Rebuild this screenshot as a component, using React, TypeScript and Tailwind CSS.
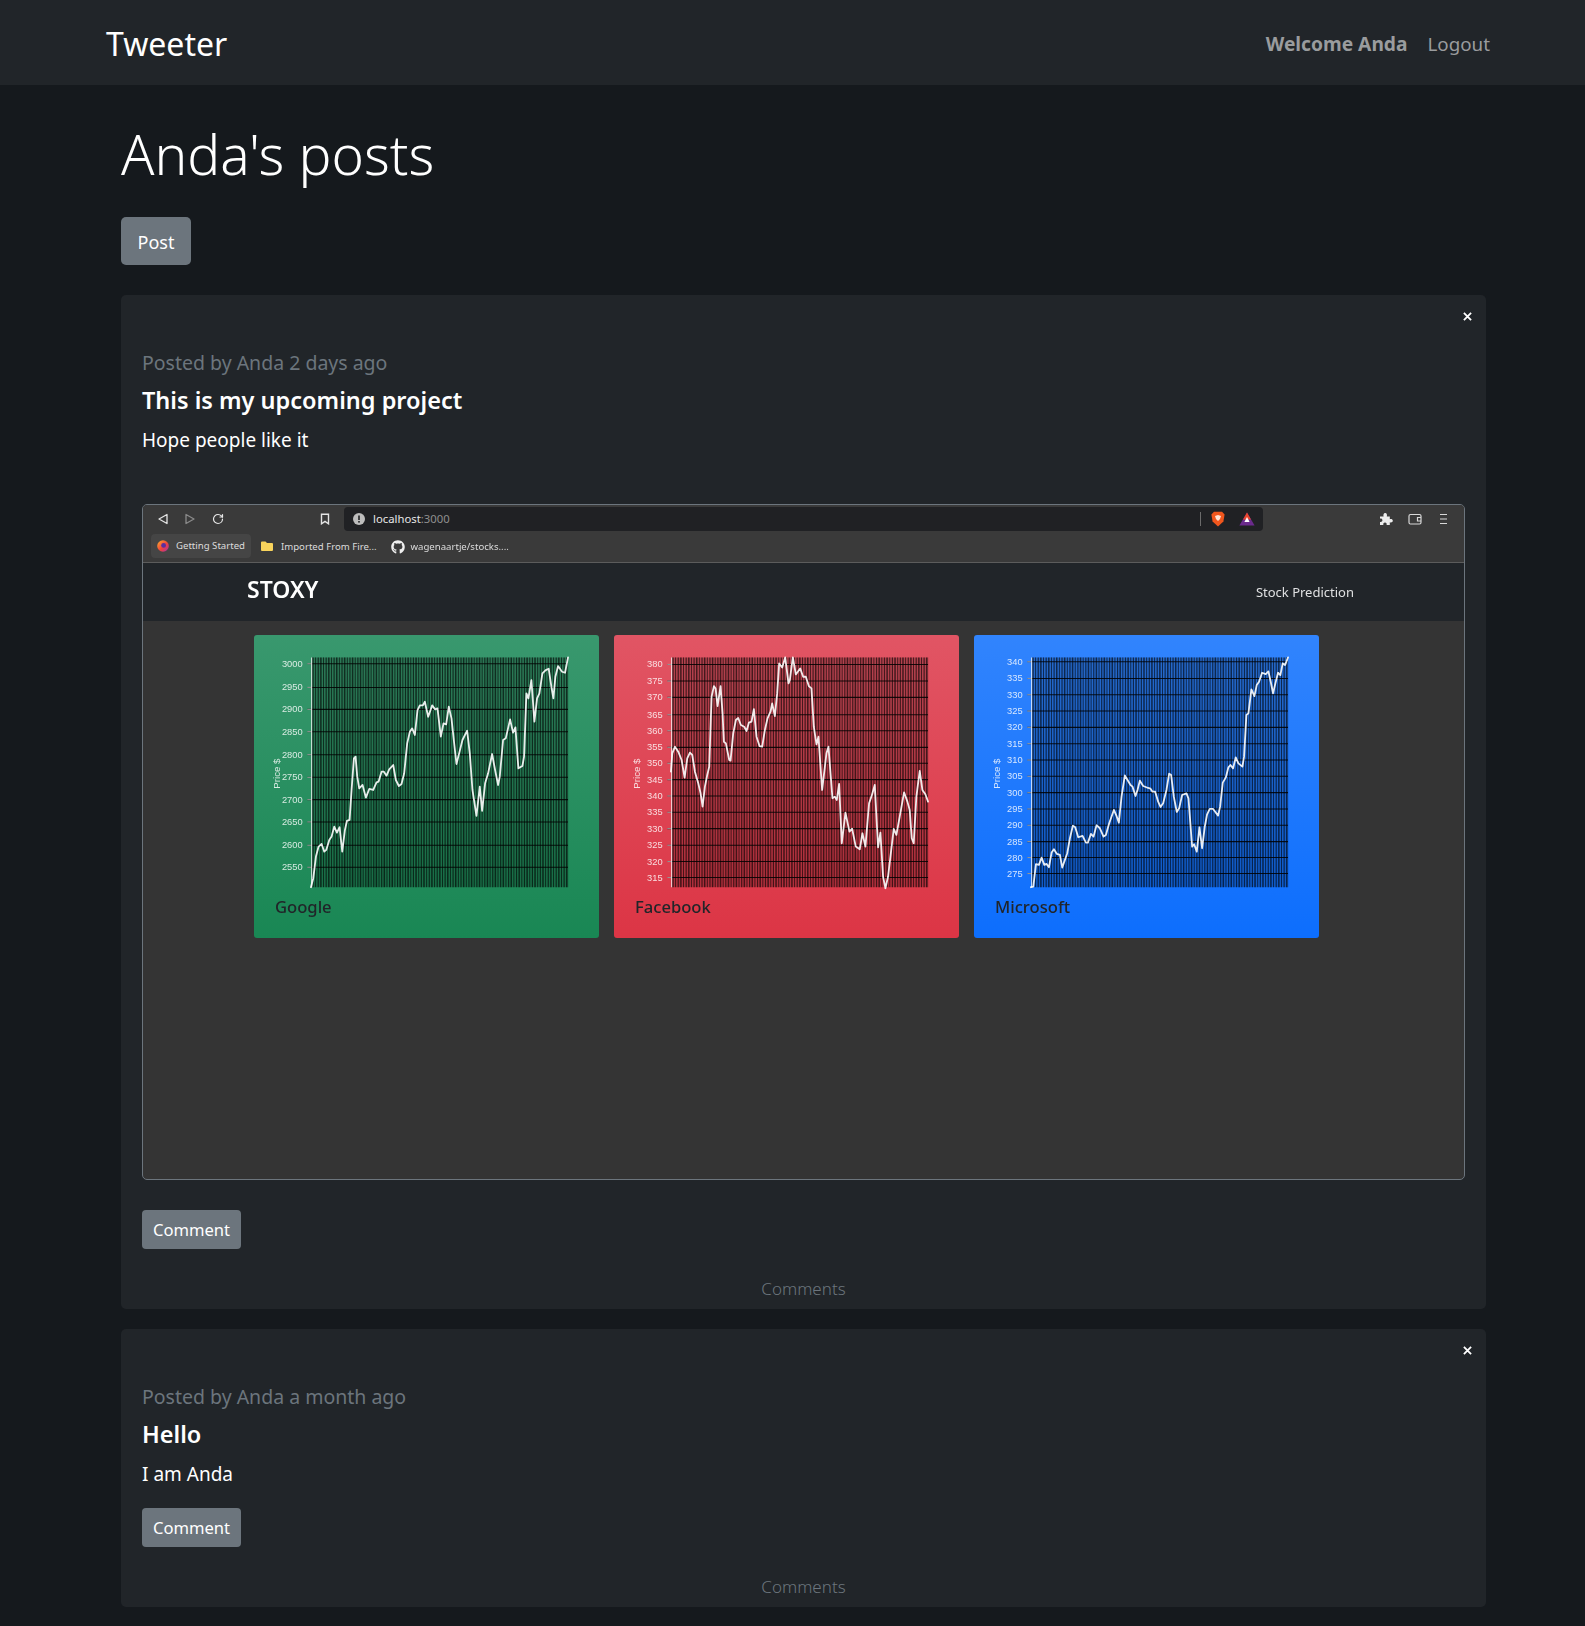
import { FaGithub } from "react-icons/fa";
import { RotateCw } from "lucide-react";

const F = "font-['Noto_Sans','Open_Sans',sans-serif]";

type Chart = {
  name: string;
  card: string;
  ticks: [string, number][];
  line: string;
};

const google: Chart = {
  name: "Google",
  card: "bg-[linear-gradient(180deg,#39986e,#198754)]",
  ticks: [["3000",101],["2950",172],["2900",238],["2850",305],["2800",374],["2750",442],["2700",509],["2650",576],["2600",646],["2550",712]],
  line: "183,772 190,745 198,680 206,650 215,642 223,665 229,660 238,630 245,620 253,590 261,608 269,592 277,665 285,600 291,573 299,570 305,480 312,385 317,380 322,440 328,475 338,465 348,503 358,477 370,480 380,457 386,455 395,425 402,425 410,437 418,418 430,405 438,450 447,468 455,462 463,430 472,340 480,305 487,295 495,315 503,240 510,226 519,226 525,215 535,260 547,226 556,238 563,235 573,320 581,280 589,283 597,230 605,265 612,330 620,402 628,370 638,330 652,302 660,370 668,480 680,558 690,470 697,543 706,460 715,430 727,372 736,420 745,465 750,440 760,330 768,325 781,268 790,308 797,292 806,415 818,408 823,380 830,190 836,205 845,150 854,275 862,205 869,190 878,130 888,120 897,116 905,170 911,205 917,140 925,108 937,125 946,128 955,82",
};
const facebook: Chart = {
  name: "Facebook",
  card: "bg-[linear-gradient(180deg,#e15564,#dc3545)]",
  ticks: [["380",103],["375",153],["370",202],["365",254],["360",302],["355",352],["350",400],["345",449],["340",498],["335",547],["330",596],["325",646],["320",695],["315",743]],
  line: "183,425 187,370 195,350 205,365 215,390 224,443 232,385 240,368 247,375 255,425 265,460 272,490 278,530 285,470 292,435 298,410 305,200 312,168 317,175 323,228 332,168 338,250 342,335 348,340 358,390 362,392 370,310 378,270 385,264 393,285 403,290 410,303 417,278 425,275 432,237 440,320 449,348 457,350 465,300 473,265 482,245 487,220 495,258 502,190 508,100 517,112 526,82 536,160 540,150 549,82 558,133 571,115 580,140 588,140 597,168 605,175 612,290 620,343 626,320 637,480 650,370 656,350 668,505 675,500 681,510 688,462 696,640 707,548 719,605 727,596 738,650 750,658 758,610 767,650 778,520 785,500 795,465 805,652 812,608 820,740 827,775 835,740 852,597 860,615 870,560 883,487 893,515 900,540 906,625 912,640 920,500 930,423 938,480 947,493 955,515",
};
const microsoft: Chart = {
  name: "Microsoft",
  card: "bg-[linear-gradient(180deg,#3184fd,#0d6efd)]",
  ticks: [["340",95],["335",145],["330",194],["325",243],["320",292],["315",341],["310",390],["305",439],["300",488],["295",537],["290",586],["285",635],["280",683],["275",731]],
  line: "183,772 190,770 198,703 207,705 215,683 223,705 230,702 237,712 245,668 252,658 261,672 270,675 277,713 285,690 292,670 300,625 309,587 316,592 325,622 338,618 348,638 354,638 363,612 371,620 380,586 390,595 401,620 408,615 418,580 432,540 440,558 447,578 455,500 465,436 473,450 482,465 488,470 497,498 503,480 510,452 520,468 535,474 542,476 548,485 556,485 565,515 572,531 580,520 590,480 598,431 604,435 612,500 621,546 628,535 637,495 650,490 656,505 667,650 673,643 681,665 689,592 697,655 705,590 712,553 720,537 730,537 745,557 751,530 759,458 768,443 776,412 782,405 790,415 798,382 806,400 818,410 823,380 830,255 836,250 845,178 854,198 861,165 868,155 877,128 888,132 896,124 903,155 910,190 917,160 925,128 932,135 939,100 946,105 955,82",
};

const verticals = Array.from({ length: 97 }, (_, i) => 189 + i * 7.94);

function ChartCard({ c }: { c: Chart }) {
  return (
    <div className={`flex h-[303px] w-[345px] flex-col rounded-[3px] ${c.card}`}>
      <svg viewBox="12 15 1036 780" className="h-[260px] w-[345px] shrink-0 blur-[0.4px]">
        <rect x="186" y="82" width="770" height="690" fill="#000" fillOpacity="0.2" />
        {verticals.map((x, i) => (
          <line
            key={x}
            x1={x}
            x2={x}
            y1="82"
            y2="772"
            stroke="#000"
            strokeOpacity="0.62"
            strokeWidth={i % 3 === 0 ? 4.6 : i % 3 === 1 ? 3 : 3.6}
          />
        ))}
        {c.ticks.map(([t, y]) => (
          <g key={t}>
            <line x1="172" x2="955" y1={y} y2={y} stroke="#000" strokeOpacity="0.85" strokeWidth="3.2" />
            <line x1="172" x2="185" y1={y} y2={y} stroke="#fff" strokeOpacity="0.7" strokeWidth="2.5" />
            <text x="158" y={y + 9} textAnchor="end" fontSize="28" fill="#fff" fillOpacity="0.82" fontFamily="'Liberation Sans',sans-serif">
              {t}
            </text>
          </g>
        ))}
        <line x1="185" x2="185" y1="82" y2="772" stroke="#fff" strokeOpacity="0.75" strokeWidth="3.4" />
        <text transform="translate(91 476) rotate(-90)" fontSize="29" fill="#fff" fillOpacity="0.82" fontFamily="'Liberation Sans',sans-serif">
          Price $
        </text>
        <polyline points={c.line} fill="none" stroke="#fff" strokeOpacity="0.9" strokeWidth="5.4" strokeLinejoin="round" strokeLinecap="round" />
      </svg>
      <div className="pl-[21px] text-[16.6px] leading-[24px] font-medium text-[#212529]">{c.name}</div>
    </div>
  );
}

function Arrow({ dir, color }: { dir: "l" | "r"; color: string }) {
  return (
    <svg viewBox="0 0 12 12" className="h-3 w-3" fill="none" stroke={color} strokeWidth="1.3" strokeLinejoin="round">
      <path d={dir === "l" ? "M10 1.5V10.5L2 6Z" : "M2 1.5V10.5L10 6Z"} />
    </svg>
  );
}

function BrowserShot() {
  return (
    <div className="mt-[49px] h-[676px] overflow-hidden rounded-[5px] border border-[#6c757d] bg-[#343434]">
      <div className="blur-[0.35px]">
        <div className="h-[58px] border-b border-[#5c5c5c] bg-[#3a3a3a]">
          <div className="flex h-[28px] items-center">
            <div className="flex w-[201px] items-center pl-[14px]">
              <Arrow dir="l" color="#e4e4e4" />
              <div className="ml-[15px]">
                <Arrow dir="r" color="#8a8a8a" />
              </div>
              <RotateCw className="ml-[16px] h-3 w-3 text-[#e8e8e8]" strokeWidth={2.4} />
              <svg viewBox="0 0 12 12" className="ml-[95px] h-3 w-3" fill="none" stroke="#e4e4e4" strokeWidth="1.4">
                <path d="M2.5 1.2H9.5V10.8L6 8.4L2.5 10.8Z" />
              </svg>
            </div>
            <div className="flex h-[24px] w-[919px] items-center rounded-[4px] bg-[#202124] pl-[9px] pr-[8px]">
              <svg viewBox="0 0 12 12" className="h-3 w-3">
                <circle cx="6" cy="6" r="6" fill="#bdbdbd" />
                <rect x="5.2" y="2.5" width="1.6" height="4.5" fill="#202124" />
                <rect x="5.2" y="8" width="1.6" height="1.6" fill="#202124" />
              </svg>
              <div className="ml-[8px] text-[11.3px] leading-[16px] text-[#e6e6e6]">
                localhost<span className="text-[#8f8f8f]">:3000</span>
              </div>
              <div className="ml-auto h-[14px] w-px bg-[#6b6b6b]" />
              <svg viewBox="0 0 14 16" className="ml-[10px] h-[16px] w-[14px]">
                <path d="M3 .8H11L13.6 3.4L12.4 10.5L7 15.4L1.6 10.5L.4 3.4Z" fill="#f0561d" />
                <path d="M4 5L7 4L10 5L9 8L7 10L5 8Z" fill="#ffe3d6" />
              </svg>
              <svg viewBox="0 0 16 14" className="ml-[14px] h-[14px] w-4">
                <path d="M8 .5L15.6 13.5H.4Z" fill="#6a2a8c" />
                <path d="M8 .5L12 7.5H4Z" fill="#e8452c" />
                <path d="M8 5L10.6 10H5.4Z" fill="#fff" />
              </svg>
            </div>
            <svg viewBox="0 0 14 14" className="ml-[116px] h-[14px] w-[14px]" fill="#ececec">
              <path d="M1 4.5H4.6C4.1 3 4.5 1 6.2 1S8.3 3 7.8 4.5H10.8V7.2C12.2 6.7 13.8 7.2 13.8 8.7S12.2 10.8 10.8 10.2V13H7.6C8 11.8 7.4 10.6 6 10.6S4 11.8 4.4 13H1V9.9C2.2 10.3 3.4 9.7 3.4 8.3S2.2 6.3 1 6.7Z" />
            </svg>
            <svg viewBox="0 0 14 12" className="ml-[15px] h-3 w-[14px]" fill="none" stroke="#d8d8d8" strokeWidth="1.2">
              <rect x="1" y="1.5" width="12" height="9.5" rx="1.5" />
              <path d="M13 4.5H9.5V8H13" />
            </svg>
            <svg viewBox="0 0 10 12" className="ml-[16px] h-3 w-[10px]" stroke="#d8d8d8" strokeWidth="1.2">
              <path d="M2 1.5H9M2 6H9M2 10.5H9" />
            </svg>
          </div>
          <div className="flex h-[29px] items-start pl-[8px] pt-px text-[9.6px] leading-[26px] text-[#dcdcdc]">
            <div className="flex h-[24px] w-[100px] items-center rounded-[4px] bg-[#454545] pl-[6px]">
              <svg viewBox="0 0 12 12" className="h-3 w-3 shrink-0">
                <defs>
                  <linearGradient id="ff" x1="0" y1="0" x2="1" y2="1">
                    <stop offset="0" stopColor="#ffb02e" />
                    <stop offset="0.55" stopColor="#f0433a" />
                    <stop offset="1" stopColor="#a02fb5" />
                  </linearGradient>
                </defs>
                <circle cx="6" cy="6" r="5.8" fill="url(#ff)" />
                <circle cx="6.6" cy="5.4" r="2.4" fill="#5a2ea0" />
              </svg>
              <span className="ml-[7px] whitespace-nowrap">Getting Started</span>
            </div>
            <svg viewBox="0 0 12 12" className="ml-[10px] mt-[6px] h-3 w-3 shrink-0">
              <path d="M0 2.5A1 1 0 0 1 1 1.5H4.5L6 3H11A1 1 0 0 1 12 4V10A1 1 0 0 1 11 11H1A1 1 0 0 1 0 10Z" fill="#f9d45c" />
            </svg>
            <span className="ml-[8px] whitespace-nowrap">Imported From Fire...</span>
            <FaGithub className="ml-[14px] mt-[6px] h-[14px] w-[14px] shrink-0 text-[#efefef]" />
            <span className="ml-[6px] whitespace-nowrap">wagenaartje/stocks....</span>
          </div>
        </div>
        <div className="flex h-[58px] items-center justify-between bg-[#212529] pl-[104px] pr-[110px] text-white">
          <div className="mb-[6px] text-[23px] leading-[28px] font-semibold">STOXY</div>
          <div className="text-[13px] leading-[18px] text-[#dfe0e1]">Stock Prediction</div>
        </div>
        <div className="flex gap-[15px] pl-[111px] pt-[14px]">
          <ChartCard c={google} />
          <ChartCard c={facebook} />
          <ChartCard c={microsoft} />
        </div>
      </div>
    </div>
  );
}

function Btn({ className = "" }: { className?: string }) {
  return (
    <div className={`flex h-[39px] w-[99px] items-center justify-center rounded-[4px] bg-[#6c757d] pt-[2px] text-[16.6px] text-white ${className}`}>
      Comment
    </div>
  );
}

function Close() {
  return (
    <svg viewBox="0 0 10 10" className="absolute right-[14px] top-[17px] h-[9px] w-[9px]" stroke="#fff" strokeWidth="2">
      <path d="M1 1L9 9M9 1L1 9" />
    </svg>
  );
}

function Post({ meta, title, body, children, btnMt }: { meta: string; title: string; body: string; children?: React.ReactNode; btnMt: string }) {
  return (
    <section className="relative rounded-[5px] bg-[#212529] px-[21px] pb-[5px] pt-[53px]">
      <Close />
      <div className="text-[19.5px] leading-[30px] text-[#6c757d]">{meta}</div>
      <div className="mt-[4px] text-[23.5px] leading-[36px] font-semibold text-white">{title}</div>
      <div className="mt-[7px] text-[19px] leading-[30px] text-white">{body}</div>
      {children}
      <Btn className={btnMt} />
      <div className="mt-[25px] text-center text-[17px] leading-[30px] font-light text-[#6c757d]">Comments</div>
    </section>
  );
}

export default function App() {
  return (
    <div className={`min-h-[1626px] bg-[#15191d] text-white ${F}`}>
      <nav className="flex h-[85px] items-center justify-between bg-[#212529] pl-[106px] pr-[95px] pt-[2px]">
        <div className="text-[32px] leading-[40px]">Tweeter</div>
        <div className="flex items-center gap-[20px] leading-[30px] text-[#9a9c9e]">
          <span className="text-[19.2px] font-bold">Welcome Anda</span>
          <span className="text-[18.8px]">Logout</span>
        </div>
      </nav>
      <main className="mx-[99px] pl-[22px]">
        <div className="w-[1365px]">
          <h1 className="pt-[32px] text-[55px] leading-[74px] font-light">Anda's posts</h1>
          <div className="mt-[26px] flex h-[48px] w-[70px] items-center justify-center rounded-[5px] bg-[#6c757d] pt-[2px] text-[18px]">Post</div>
          <div className="mt-[30px] flex flex-col gap-[20px]">
            <Post meta="Posted by Anda 2 days ago" title="This is my upcoming project" body="Hope people like it" btnMt="mt-[30px]">
              <BrowserShot />
            </Post>
            <Post meta="Posted by Anda a month ago" title="Hello" body="I am Anda" btnMt="mt-[19px]" />
          </div>
        </div>
      </main>
    </div>
  );
}
